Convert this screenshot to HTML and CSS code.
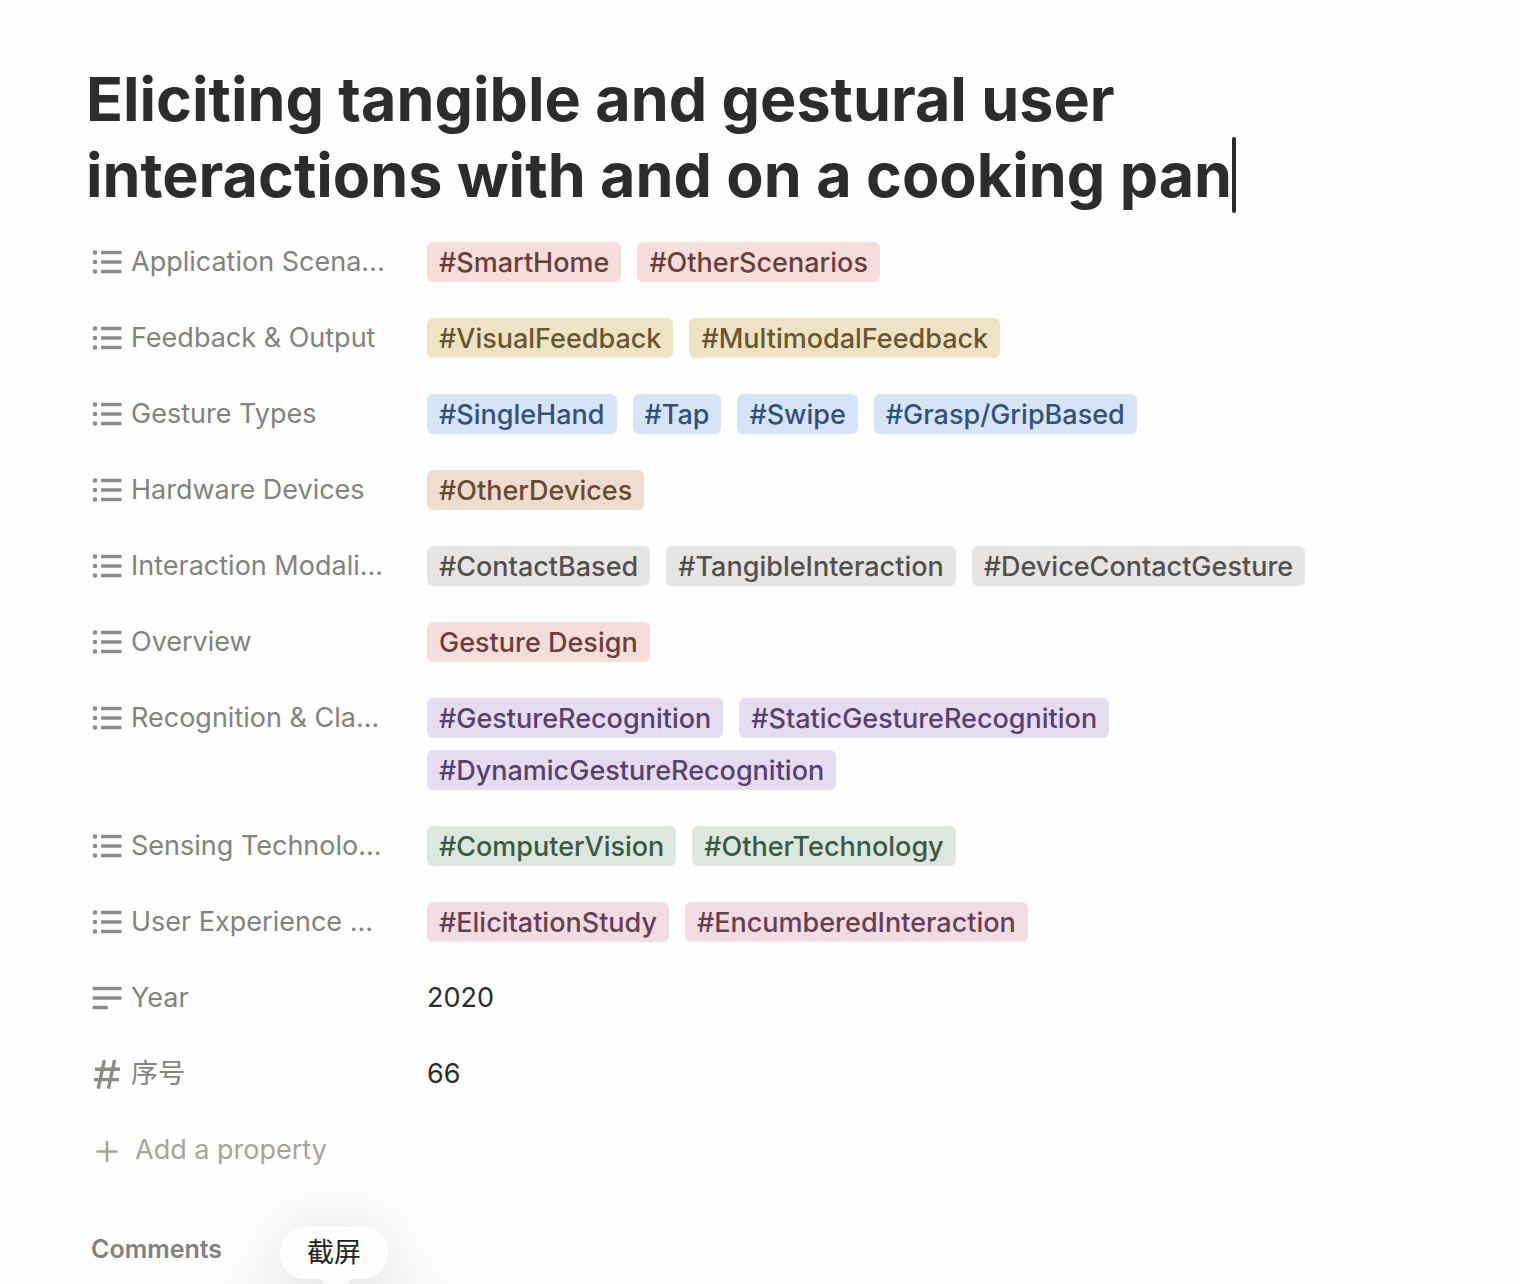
FILE: index.html
```html
<!DOCTYPE html>
<html lang="en">
<head>
<meta charset="utf-8">
<title>Eliciting tangible and gestural user interactions with and on a cooking pan</title>
<link rel="stylesheet" href="styles.css">
</head>
<body>
<svg class="sprite" aria-hidden="true">
  <symbol id="list" viewBox="0 0 30 30">
    <circle cx="3" cy="5.500" r="2.300"/><circle cx="3" cy="15" r="2.300"/><circle cx="3" cy="24.500" r="2.300"/>
    <rect x="9" y="3.800" width="20.600" height="3.400" rx=".8"/><rect x="9" y="13.300" width="20.600" height="3.400" rx=".8"/><rect x="9" y="22.800" width="20.600" height="3.400" rx=".8"/>
  </symbol>
  <symbol id="text" viewBox="0 0 30 30">
    <rect x=".6" y="3.800" width="29" height="3.400" rx=".8"/><rect x=".6" y="13.300" width="29" height="3.400" rx=".8"/><rect x=".6" y="22.800" width="15.200" height="3.400" rx=".8"/>
  </symbol>
  <symbol id="number" viewBox="0 0 30 30">
    <path d="M3 10.200h25M2 20.600h25M12.400 1.200 6.200 29.600M22.600 1.200 16.400 29.600" fill="none" stroke="currentColor" stroke-width="3.400"/>
  </symbol>
  <symbol id="plus" viewBox="0 0 30 30">
    <path d="M15 7v19M5.500 16.500h19" fill="none" stroke="currentColor" stroke-width="2.600" stroke-linecap="round"/>
  </symbol>
</svg>
<main class="page">
  <h1 class="title">Eliciting tangible and gestural user<br>interactions with and on a cooking pan<span class="caret"></span></h1>
  <dl class="properties">
    <div class="property">
      <dt class="name"><svg class="icon"><use href="#list"/></svg>Application Scena...</dt>
      <dd class="value"><span class="tag red">#SmartHome</span><span class="tag red">#OtherScenarios</span></dd>
    </div>
    <div class="property">
      <dt class="name"><svg class="icon"><use href="#list"/></svg>Feedback &amp; Output</dt>
      <dd class="value"><span class="tag yellow">#VisualFeedback</span><span class="tag yellow">#MultimodalFeedback</span></dd>
    </div>
    <div class="property">
      <dt class="name"><svg class="icon"><use href="#list"/></svg>Gesture Types</dt>
      <dd class="value"><span class="tag blue">#SingleHand</span><span class="tag blue">#Tap</span><span class="tag blue">#Swipe</span><span class="tag blue">#Grasp/GripBased</span></dd>
    </div>
    <div class="property">
      <dt class="name"><svg class="icon"><use href="#list"/></svg>Hardware Devices</dt>
      <dd class="value"><span class="tag orange">#OtherDevices</span></dd>
    </div>
    <div class="property">
      <dt class="name"><svg class="icon"><use href="#list"/></svg>Interaction Modali...</dt>
      <dd class="value"><span class="tag gray">#ContactBased</span><span class="tag gray">#TangibleInteraction</span><span class="tag gray">#DeviceContactGesture</span></dd>
    </div>
    <div class="property">
      <dt class="name"><svg class="icon"><use href="#list"/></svg>Overview</dt>
      <dd class="value"><span class="tag red">Gesture Design</span></dd>
    </div>
    <div class="property">
      <dt class="name"><svg class="icon"><use href="#list"/></svg>Recognition &amp; Cla...</dt>
      <dd class="value"><span class="tag purple">#GestureRecognition</span><span class="tag purple">#StaticGestureRecognition</span><span class="tag purple">#DynamicGestureRecognition</span></dd>
    </div>
    <div class="property">
      <dt class="name"><svg class="icon"><use href="#list"/></svg>Sensing Technolo...</dt>
      <dd class="value"><span class="tag green">#ComputerVision</span><span class="tag green">#OtherTechnology</span></dd>
    </div>
    <div class="property">
      <dt class="name"><svg class="icon"><use href="#list"/></svg>User Experience ...</dt>
      <dd class="value"><span class="tag pink">#ElicitationStudy</span><span class="tag pink">#EncumberedInteraction</span></dd>
    </div>
    <div class="property">
      <dt class="name"><svg class="icon"><use href="#text"/></svg>Year</dt>
      <dd class="value">2020</dd>
    </div>
    <div class="property">
      <dt class="name"><svg class="icon"><use href="#number"/></svg><span lang="zh">序号</span></dt>
      <dd class="value">66</dd>
    </div>
  </dl>
  <button class="add" type="button"><svg class="icon"><use href="#plus"/></svg>Add a property</button>
  <h2 class="comments">Comments</h2>
</main>
<div class="tooltip" role="tooltip" lang="zh">截屏<svg class="tail" viewBox="0 0 44 12"><path d="M0 0C10 0 14 12 22 12S34 0 44 0z"/></svg></div>
</body>
</html>
```
FILE: styles.css
```css
* { box-sizing: border-box; }

body {
  margin: 0;
  min-height: 100vh;
  overflow: hidden;
  position: relative;
  background: linear-gradient(to top, #fbfbfb, #fefefe 40px);
  color: #2c2c2b;
  font: 400 27px/40px Inter, "Noto Sans CJK SC", sans-serif;
}

.sprite { position: absolute; width: 0; height: 0; }

.page { padding: 61px 86px 0; }

.title {
  margin: 0 0 15px;
  font-size: 61px;
  line-height: 76px;
  font-weight: 700;
}

.caret {
  display: inline-block;
  width: 4px;
  height: 76px;
  border-radius: 2px;
  background: #2c2c2b;
  vertical-align: bottom;
}

.properties {
  margin: 0 0 8px;
  display: flex;
  flex-direction: column;
  gap: 8px;
}

.property {
  display: grid;
  grid-template-columns: 321px 1fr;
  gap: 20px;
}

.name {
  display: flex;
  align-items: center;
  gap: 9px;
  height: 68px;
  padding-left: 6px;
  color: #83827d;
  white-space: nowrap;
}

.icon {
  flex: none;
  width: 30px;
  height: 30px;
  color: #8e8b86;
  fill: currentColor;
}

.value {
  margin: 0;
  padding: 14px 0;
  display: flex;
  flex-wrap: wrap;
  gap: 12px 16px;
}

.tag {
  padding: 1px 12px 0;
  border-radius: 6px;
  font-weight: 500;
  line-height: 39px;
  white-space: nowrap;
}

.red { background: #f5dddb; color: #6c3e3a; }
.yellow { background: #efe3c6; color: #69572f; }
.blue { background: #d5e4f6; color: #34517a; }
.orange { background: #f0dccf; color: #694a30; }
.gray { background: #e6e5e3; color: #52514e; }
.purple { background: #e6dcef; color: #57416d; }
.green { background: #dce7df; color: #3b5a46; }
.pink { background: #f1dce3; color: #683e52; }

.add {
  display: flex;
  align-items: center;
  gap: 13px;
  height: 68px;
  padding: 0 6px;
  border: 0;
  background: none;
  color: #a8a49c;
  font: inherit;
}

.add .icon { color: inherit; }

.comments {
  margin: 0;
  padding: 45px 5px 0;
  color: #83827d;
  font-size: 25px;
  line-height: 40px;
  font-weight: 600;
}

.tooltip {
  position: absolute;
  bottom: 6px;
  left: 281px;
  padding: 6px 26px;
  border-radius: 26px;
  background: #fdfdfd;
  box-shadow: 0 0 0 1px #fff, 0 12px 80px rgba(0, 0, 0, .2);
  color: #222;
  line-height: 38px;
}

.tail {
  position: absolute;
  top: 100%;
  left: 50%;
  width: 44px;
  height: 12px;
  margin-left: -20px;
  fill: #fdfdfd;
}
```
